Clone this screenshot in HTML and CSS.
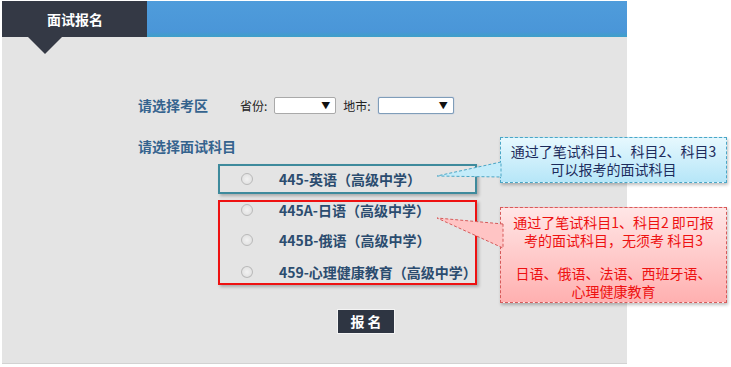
FILE: index.html
```html
<!DOCTYPE html>
<html lang="zh-CN">
<head>
    <meta charset="UTF-8">
    <title>面试报名</title>
    <link rel="stylesheet" href="styles.css">
</head>
<body>
    <div class="panel">
        <div class="header">
            <div class="header-tab">面试报名</div>
            <div class="header-bar"></div>
        </div>

        <div class="form">
            <div class="area-row">
                <span class="section-title">请选择考区</span>
                <label class="field-label">省份:</label>
                <span class="select province"><select></select></span>
                <label class="field-label">地市:</label>
                <span class="select city focused"><select></select></span>
            </div>

            <div class="section-title subject-title">请选择面试科目</div>

            <div class="subject-group teal">
                <div class="subject"><span class="radio"></span><span class="subject-name">445-英语（高级中学）</span></div>
            </div>
            <div class="subject-group red">
                <div class="subject"><span class="radio"></span><span class="subject-name">445A-日语（高级中学）</span></div>
                <div class="subject"><span class="radio"></span><span class="subject-name">445B-俄语（高级中学）</span></div>
                <div class="subject"><span class="radio"></span><span class="subject-name">459-心理健康教育（高级中学）</span></div>
            </div>

            <div class="submit-row">
                <button class="submit">报 名</button>
            </div>
        </div>
    </div>

    <div class="callout callout-blue">
        <svg class="tail" width="70" height="24" viewBox="0 0 70 24">
            <polygon points="66,1 2,15 66,16" fill="#c4ecfa" stroke="#4aa6c6" stroke-dasharray="3 2"/>
        </svg>
        <p>通过了笔试科目1、科目2、科目3</p>
        <p>可以报考的面试科目</p>
    </div>

    <div class="callout callout-red">
        <svg class="tail" width="70" height="34" viewBox="0 0 70 34">
            <polygon points="68,7 2,1 68,31" fill="#ffc4c4" stroke="#d65a5a" stroke-dasharray="3 2"/>
        </svg>
        <p>通过了笔试科目1、科目2 即可报</p>
        <p>考的面试科目，无须考 科目3</p>
        <p class="gap">日语、俄语、法语、西班牙语、</p>
        <p>心理健康教育</p>
    </div>
</body>
</html>
```

FILE: styles.css
```css
body {
    margin: 0;
    background: #ffffff;
    font-family: "Noto Sans CJK SC", "DejaVu Sans", sans-serif;
}

.panel {
    width: 625px;
    height: 363px;
    margin-left: 2px;
    background: #e4e4e4;
    border-bottom: 1px solid #d2d2d2;
}

.header {
    display: flex;
    height: 36px;
    padding-top: 1px;
    background: #ffffff;
}

.header-tab {
    position: relative;
    width: 145px;
    background: #343945;
    color: #ffffff;
    font-size: 14px;
    font-weight: bold;
    line-height: 36px;
    padding-left: 45px;
    box-sizing: border-box;
}

.header-tab::after {
    content: '';
    position: absolute;
    left: 26px;
    top: 36px;
    border-left: 17px solid transparent;
    border-right: 17px solid transparent;
    border-top: 17px solid #343945;
}

.header-bar {
    flex: 1;
    background: linear-gradient(#4f9cdb, #4a96d8 85%, #3ea0c8);
}

.form {
    padding: 58px 0 0 136px;
}

.area-row {
    display: flex;
    align-items: center;
    height: 20px;
}

.section-title {
    color: #35638e;
    font-size: 14px;
    font-weight: bold;
}

.area-row .section-title {
    margin-right: 32px;
}

.field-label {
    font-size: 12px;
    color: #222222;
    margin-right: 7px;
}

.select {
    position: relative;
    display: inline-block;
    height: 17px;
    background: #ffffff;
    border: 1px solid #a9a9a9;
    border-radius: 2px;
    box-sizing: border-box;
    margin-right: 7px;
}

.select select {
    appearance: none;
    border: none;
    background: transparent;
    width: 100%;
    height: 100%;
}

.select::after {
    content: '\25BC';
    position: absolute;
    right: 5px;
    top: 1px;
    font-size: 9px;
    color: #111111;
}

.province { width: 62px; }
.city { width: 76px; border-color: #7f9db9; box-shadow: 0 0 1px #6a8fc8; }

.subject-title {
    margin-top: 21px;
    height: 20px;
    line-height: 20px;
}

.subject-group {
    width: 259px;
    margin-left: 80px;
    box-sizing: border-box;
    box-shadow: 2px 2px 3px rgba(0, 0, 0, 0.25);
}

.teal {
    margin-top: 8px;
    height: 30px;
    border: 2px solid #3e8a9c;
}

.red {
    margin-top: 6px;
    height: 85px;
    border: 2px solid #ee1111;
}

.subject {
    display: flex;
    align-items: center;
    height: 30px;
}

.teal .subject {
    height: 26px;
}

.red .subject:first-child {
    margin-top: -7px;
}

.red .subject:last-child {
    height: 31px;
    padding-top: 1px;
}

.radio {
    width: 10px;
    height: 10px;
    border: 1px solid #b9b9b9;
    border-radius: 50%;
    background: radial-gradient(#f2f2f2, #dcdcdc);
    margin-left: 21px;
    margin-right: 26px;
}

.subject-name {
    color: #2b4c6f;
    font-size: 14px;
    font-weight: bold;
    font-family: "Noto Sans CJK SC", "DejaVu Serif", serif;
}

.submit-row {
    margin-top: 23px;
    padding-left: 200px;
}

.submit {
    width: 56px;
    height: 23px;
    background: #2e3542;
    color: #ffffff;
    border: none;
    outline: 1px solid #f4f4f4;
    font-family: "Noto Sans CJK SC", sans-serif;
    font-size: 14px;
    font-weight: bold;
    padding: 0;
    cursor: pointer;
}

.callout {
    position: absolute;
    left: 500px;
    width: 227px;
    box-sizing: border-box;
    border: 1px dashed;
    text-align: center;
    font-size: 14px;
    box-shadow: 1px 2px 3px rgba(0, 0, 0, 0.25);
}

.callout p {
    margin: 0;
    position: relative;
    height: 18px;
    line-height: 18px;
}

.callout .tail {
    position: absolute;
    left: -66px;
}

.callout-blue {
    top: 137px;
    height: 46px;
    padding-top: 4px;
    color: #1c2b5c;
    border-color: #4aa6c6;
    background: linear-gradient(#e6f8fe, #b6e6f8);
}

.callout-blue .tail {
    top: 23px;
}

.callout-red {
    top: 207px;
    height: 96px;
    padding-top: 5px;
    color: #ee1111;
    border-color: #d65a5a;
    background: linear-gradient(#ffe6e6, #ffb0b0);
}

.callout-red .tail {
    top: 9px;
}

.callout-red .gap {
    margin-top: 15px;
}
```
